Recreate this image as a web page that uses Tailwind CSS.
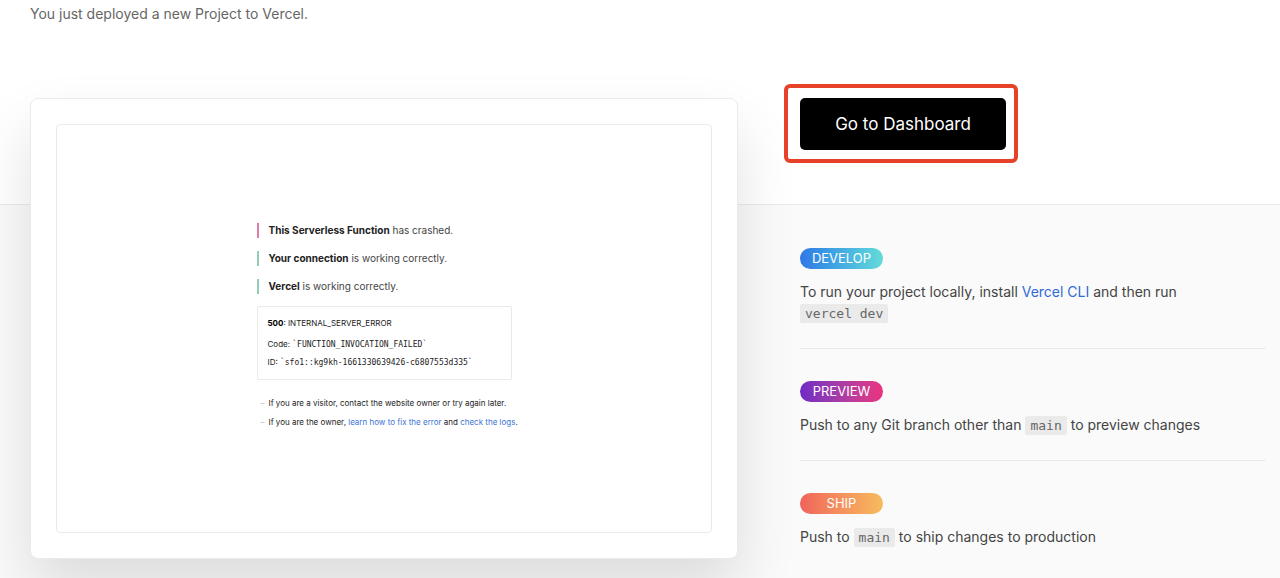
<!DOCTYPE html>
<html lang="en">
<head>
    <meta charset="UTF-8">
    <meta name="viewport" content="width=device-width, initial-scale=1.0">
    <title>Project deployed - Vercel</title>
    <script src="https://cdn.jsdelivr.net/npm/@tailwindcss/browser@4"></script>
</head>
<body class="bg-white font-['Inter',sans-serif] text-[14px] leading-[21px] text-[#444]">
    <main class="flex min-h-screen flex-col">
        <p class="px-[30px] pt-[3px] pb-[74px] text-[#666]">You just deployed a new Project to Vercel.</p>

        <div class="grid flex-1 grid-cols-[30px_708fr_62px_466fr_14px] grid-rows-[106px_1fr]">
            <!-- grey band behind the lower part -->
            <div class="col-span-full row-start-2 border-t border-[#eaeaea] bg-[#fafafa]"></div>

            <!-- deployment preview -->
            <section class="col-start-2 row-span-2 row-start-1 mb-5 self-start rounded-lg border border-[#eaeaea] bg-white p-[25px] shadow-[0_30px_60px_rgba(0,0,0,0.12)]">
                <div class="flex aspect-[656/409] items-center justify-center rounded border border-[#eaeaea] pb-0.5 text-[8px] leading-[18px] text-[#222]">
                    <div class="w-[255px]">
                        <div class="flex flex-col gap-[13px] text-[10px] leading-[15px] text-[#444]">
                            <p class="border-l-2 border-[#e07ba5] pl-[10px]"><b class="text-[#222]">This Serverless Function</b> has crashed.</p>
                            <p class="border-l-2 border-[#93cdb8] pl-[10px]"><b class="text-[#222]">Your connection</b> is working correctly.</p>
                            <p class="border-l-2 border-[#93cdb8] pl-[10px]"><b class="text-[#222]">Vercel</b> is working correctly.</p>
                        </div>
                        <div class="mt-3 rounded-xs border border-[#eaeaea] px-[10px] pt-[7px] pb-2">
                            <p class="mb-[3px]"><b class="text-black">500</b>: INTERNAL_SERVER_ERROR</p>
                            <p>Code: <code class="font-['DejaVu_Sans_Mono',monospace] leading-none">`FUNCTION_INVOCATION_FAILED`</code></p>
                            <p>ID: <code class="font-['DejaVu_Sans_Mono',monospace] leading-none">`sfo1::kg9kh-1661330639426-c6807553d335`</code></p>
                        </div>
                        <ul class="mt-[14px] leading-[19px] whitespace-nowrap">
                            <li class="flex gap-1 pl-1"><span class="text-[#bbb]">–</span><span>If you are a visitor, contact the website owner or try again later.</span></li>
                            <li class="flex gap-1 pl-1"><span class="text-[#bbb]">–</span><span>If you are the owner, <a href="#" class="text-[#3b74d6]">learn how to fix the error</a> and <a href="#" class="text-[#3b74d6]">check the logs</a>.</span></li>
                        </ul>
                    </div>
                </div>
            </section>

            <!-- dashboard button with its highlight frame -->
            <div class="relative col-start-4 row-start-1 w-fit self-start">
                <button type="button" class="h-[52px] w-[206px] rounded-[5px] bg-black text-[17px] text-white">Go to Dashboard</button>
                <span class="pointer-events-none absolute -top-[14px] -right-3 -bottom-[13px] -left-4 rounded-md border-4 border-[#e8412a]"></span>
            </div>

            <ul class="col-start-4 row-start-2 divide-y divide-[#eaeaea] pt-3">
                <li class="pt-8 pb-[25px]">
                    <h3 class="mb-3 w-[83px] rounded-full bg-linear-to-r from-[#3178e6] to-[#64dcd8] text-center text-[13px] text-white">DEVELOP</h3>
                    <p>To run your project locally, install <a href="#" class="text-[#2f6bd8]">Vercel CLI</a> and then run <code class="rounded-xs bg-[#eaeaea] px-[5px] py-0.5 font-['DejaVu_Sans_Mono',monospace] text-[13px] leading-none whitespace-nowrap text-[#666]">vercel dev</code></p>
                </li>
                <li class="pt-8 pb-[25px]">
                    <h3 class="mb-3 w-[83px] rounded-full bg-linear-to-r from-[#7029c4] to-[#ea327f] text-center text-[13px] text-white">PREVIEW</h3>
                    <p>Push to any Git branch other than <code class="rounded-xs bg-[#eaeaea] px-[5px] py-0.5 font-['DejaVu_Sans_Mono',monospace] text-[13px] leading-none whitespace-nowrap text-[#666]">main</code> to preview changes</p>
                </li>
                <li class="pt-8 pb-[25px]">
                    <h3 class="mb-3 w-[83px] rounded-full bg-linear-to-r from-[#ef635b] to-[#f6bb5d] text-center text-[13px] text-white">SHIP</h3>
                    <p>Push to <code class="rounded-xs bg-[#eaeaea] px-[5px] py-0.5 font-['DejaVu_Sans_Mono',monospace] text-[13px] leading-none whitespace-nowrap text-[#666]">main</code> to ship changes to production</p>
                </li>
            </ul>
        </div>
    </main>
</body>
</html>
